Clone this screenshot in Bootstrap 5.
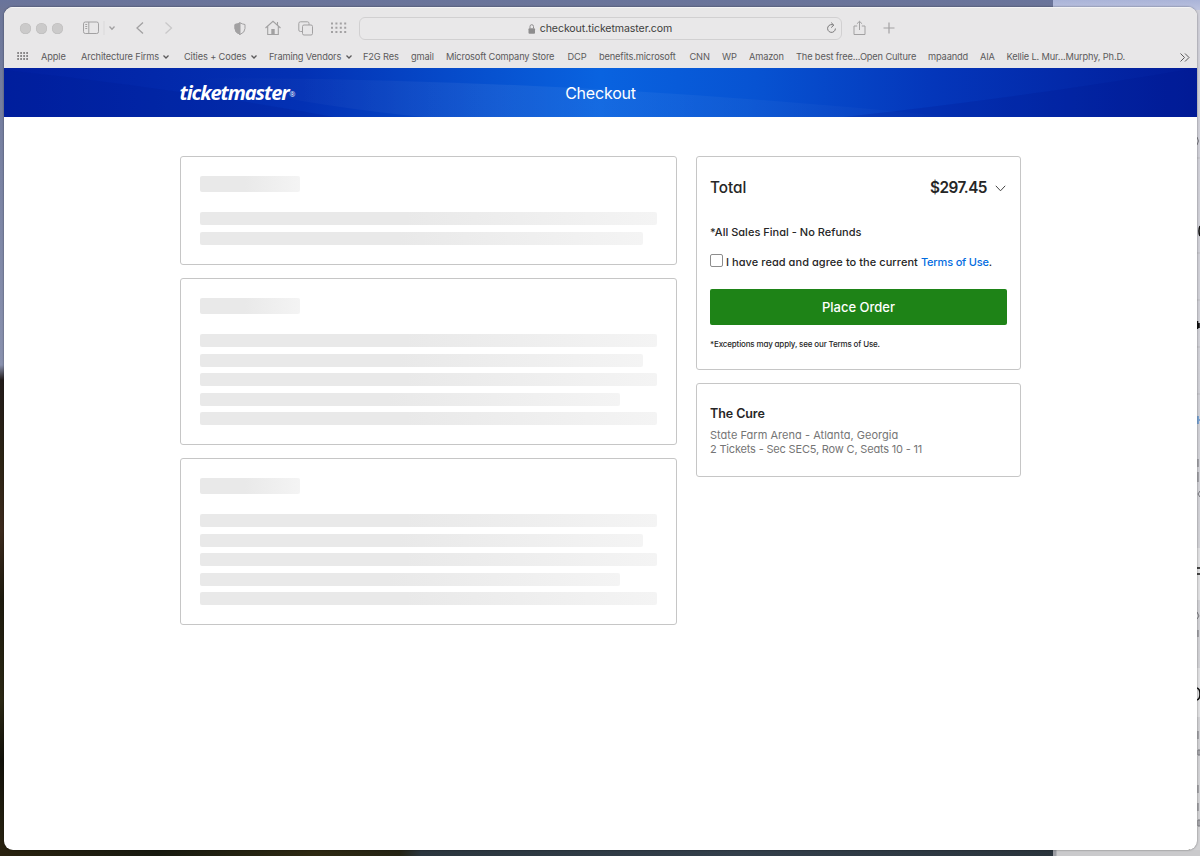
<!DOCTYPE html>
<html lang="en">
<head>
<meta charset="utf-8">
<meta name="viewport" content="width=device-width, initial-scale=1">
<title>Checkout</title>
<link href="https://cdn.jsdelivr.net/npm/bootstrap@5.3.0/dist/css/bootstrap.min.css" rel="stylesheet">
<style>
body{width:1200px;height:856px;overflow:hidden;padding:7px 3px 6px 4px;font-family:Inter,"Liberation Sans",sans-serif;
 background:
 linear-gradient(#aab4d8,#bcc3df) 1053px 0/147px 10px no-repeat,
 linear-gradient(90deg,#9b9da3 0 3px,#cacacc 4px) 1053px 850px/147px 6px no-repeat,
 linear-gradient(#cfcfd8,#d2d2d4) 1190px 0/10px 856px no-repeat,
 linear-gradient(90deg,#29220f,#181a10 15%,#2e2912 30%,#252414 38%,#2b363e 40%,#333f4b 70%,#2a343c) 0 840px/1053px 16px no-repeat,
 linear-gradient(#69749c,#6d7597) 0 0/1053px 10px no-repeat,
 linear-gradient(#6c7699,#8991ae 365px,#221b1a 380px,#2c2414 460px,#3c2a1d 530px,#1d1a0e 600px,#2b2814 700px,#12110a 760px,#2b2612);}
.window{height:843px;border-radius:9px;background:#fff;box-shadow:0 0 2px rgba(0,0,0,.5)}
.chrome{height:61px;background:#e8e7e8;box-shadow:inset 0 1px #f4f4f5}
.tools{height:42px;color:#a2a1a2;display:grid;grid-template-columns:16.5px 16px 31px 25px 28px 28px 69.5px 31px 33.5px 33px 27.5px 494.5px 30px 30px;padding-left:15.5px;align-items:center}
.tools svg,.marks svg{display:block;overflow:visible;fill:none;stroke:currentColor}
.dot{width:11px;height:11px;border-radius:50%;background:#cbcaca;box-shadow:inset 0 0 0 .5px #bdbcbc}
.address{width:483px;height:23px;padding-top:1px;border:1px solid #d1d0d1;border-radius:6px;background:#e9e8e9;font-size:10.6px;letter-spacing:-.1px;color:#3f3f40;position:relative}
.reload{position:absolute;right:4px;top:4px}
.marks{height:19px;display:grid;grid-template-columns:24px 40px 103px 85px 94px 48px 35px 121.5px 31.5px 90.5px 32.5px 27px 47px 132px 52px 26.5px 173.5px 12px;padding-left:13px;font-size:9.25px;letter-spacing:-.14px;line-height:15px;color:#5b5a5b;white-space:nowrap}
.marks svg.caret{display:inline-block;margin-left:4.5px;vertical-align:1px;stroke-width:1.3}
.brandbar{height:49px;padding-left:175.5px;color:#fff;position:relative;overflow:hidden;background:linear-gradient(90deg,#011fa0,#0331b4 25%,#0752d0 41%,#0963e0 50%,#0753d2 63%,#0436ba 78%,#021c98)}
.sheen{position:absolute;inset:0;width:100%;height:100%}
.logo{font:italic 700 20px/50px "Open Sans","Noto Sans",sans-serif;letter-spacing:-1.05px;position:relative}
.reg{font:400 7px/1 "Open Sans",sans-serif;letter-spacing:0;vertical-align:3px;margin-left:1px}
.pagename{position:absolute;left:0;right:0;top:0;line-height:50px;font-size:16px;letter-spacing:-.2px;font-feature-settings:"cv11"}
.checkout{padding:39px 0 0 176px;gap:19px;font-feature-settings:"cv11"}
.left-col{width:497px;gap:13px}
.right-col{width:325px;gap:13px}
.panel{border:1px solid #c6c6c6;border-radius:3px;background:#fff}
.skel{padding:19.3px 19.5px 19px 19px}
.bone{height:13px;border-radius:2px;background:linear-gradient(90deg,#e9e9e9 45%,#f4f4f4);margin-bottom:6.5px}
.bone.head{width:100px;height:16px;margin-bottom:20px}
.bone:last-child{margin-bottom:0}
.w97{width:97%}.w92{width:92%}
.order{height:213.5px;padding:19px 13px 0;color:#262626;font-weight:550}
.total{font-size:15.3px;line-height:24px}
.amount{letter-spacing:-.5px;font-weight:600;margin-right:8px}
.chev{fill:none;stroke:#444;margin-right:1px}
.sales{font-size:11px;line-height:17px;margin-top:24px;letter-spacing:.02px}
.terms{font-size:11px;line-height:16px;margin-top:13px;letter-spacing:.06px}
.terms a{color:#026cdf;text-decoration:none;letter-spacing:-.18px}
.box{width:13px;height:13px;border:1px solid #8d8d8d;border-radius:2px;margin:-3px 3px 0 0;background:#fff}
.place{height:36px;margin-top:19px;background:#1e8317;border-radius:2px;color:#fff;font-size:13px;font-weight:550;border:0;width:297px;padding:2px 0 0}
.except{font-size:8px;line-height:12px;margin-top:13px;letter-spacing:-.16px}
.event{height:94px;padding:21px 13px 0;font-size:11px;line-height:14.6px;color:#757575}
.event h2{font-size:12.5px;line-height:18px;color:#262626;font-weight:600;letter-spacing:-.08px;margin:0 0 5px}
.arena{letter-spacing:.03px}
.seats{letter-spacing:-.18px}
.behind{position:absolute;left:1197px;top:0;width:3px;height:856px;overflow:hidden}
</style>
</head>
<body>
<svg class="behind" viewBox="0 0 3 856"><path d="M0 158H3M0 253H3M0 300H3M0 347H3M0 394H3" stroke="#bdbdc1"/><path d="M0 548H3V600H0zM0 668H3V717H0z" fill="#e0e0e2"/><g stroke="#111" stroke-width="1.6" fill="none"><path d="M3 226q-2 5 0 10M.5 321V329M2 323v5M0 568H3M0 574H3M0 688q3 1 3 6q0 5-3 6"/></g><g stroke="#77777d" fill="none"><path d="M0 137q3 4 0 8M1 459V467M1 472V482M3 491l-2 3 2 3M0 612l2 4-2 3M1 630V637M1 731V739M1 750h2v5H1zM1 785V793M1 803V811M1 820h2v6H1z"/></g><path d="M1 416V424M2 420H3" stroke="#2477cf"/></svg>
<div class="window overflow-hidden position-relative">
 <header class="chrome">
  <div class="tools">
   <i class="dot"></i><i class="dot"></i><i class="dot"></i>
   <svg width="24" height="14"><rect x=".5" y="1" width="15" height="11.500" rx="1.8"/><path d="M5.800 1V12.500M2.300 3.500H4.200M2.300 5.500H4.200M2.300 7.500H4.200"/><path d="M21 0V14" style="stroke:#dad9da"/></svg>
   <svg width="8" height="6"><path d="M1.500 1.500 4 4.200 6.500 1.500" stroke-width="1.300"/></svg>
   <svg width="8" height="12"><path d="M7 .5 1 6 7 11.500" stroke-width="1.300"/></svg>
   <svg width="8" height="12" style="stroke:#c9c8c9"><path d="M1.500 .5 7.500 6 1.500 11.500" stroke-width="1.300"/></svg>
   <svg width="12" height="13"><path d="M6 .8Q8.500 2.200 11 2.500V6.500Q11 10.500 6 12.500Q1 10.500 1 6.500V2.500Q3.500 2.200 6 .8z"/><path d="M6 .8Q3.500 2.200 1 2.500V6.500Q1 10.500 6 12.500z" fill="currentColor"/></svg>
   <svg width="16" height="15"><path d="M.5 7 8 .3 15.500 7M2.700 5.500V13.500H13.300V5.500M12.500 4V1" stroke-width="1.100"/><path d="M6.300 13.500V8H9.700V13.500z" fill="currentColor" stroke="none"/></svg>
   <svg width="16" height="15"><rect x="4.500" y="4" width="10" height="10" rx="1.500"/><path d="M4.500 10.500H2.500Q.8 10.500 .8 9V2.500Q.8 .8 2.500 .8H9.500Q11 .8 11 2.500V4"/></svg>
   <svg width="16" height="12"><path d="M0 1.500H15.500M0 5.800H15.500M0 10.100H15.500" stroke-width="2" stroke-dasharray="2 2.400"/></svg>
   <div class="address d-flex align-items-center justify-content-center"><svg class="me-1" width="8" height="10"><rect x=".5" y="4.300" width="6.500" height="5.500" rx="1" style="fill:#8e8d8e;stroke:none"/><path d="M2 4.500V2.500Q2 .7 3.750 .7T5.500 2.500V4.500" style="stroke:#8e8d8e"/></svg><span>checkout.ticketmaster.com</span>
    <svg class="reload" width="11" height="12" style="stroke:#7b7a7b"><path d="M7.600 3.200A3.900 3.900 0 1 0 9.400 6.500M5.200 .6 7.800 3.200 5.200 5.600"/></svg></div>
   <svg width="13" height="15"><path d="M4.200 5H1V13.500H12V5H8.800M6.500 9V.3M3.900 2.800 6.500 .3 9.100 2.800"/></svg>
   <svg width="12" height="12"><path d="M.5 6H11.500M6 .5V11.500" stroke-width="1.200"/></svg>
  </div>
  <nav class="marks">
   <svg width="11" height="9" style="margin-top:3px"><path d="M.3 .9H11M.3 3.900H11M.3 6.900H11" stroke-width="1.500" stroke-dasharray="1.600 1.400"/></svg>
   <span>Apple</span>
   <span>Architecture Firms<svg class="caret" width="6" height="4"><path d="M.5 .5 3 3 5.500 .5"/></svg></span>
   <span>Cities + Codes<svg class="caret" width="6" height="4"><path d="M.5 .5 3 3 5.500 .5"/></svg></span>
   <span>Framing Vendors<svg class="caret" width="6" height="4"><path d="M.5 .5 3 3 5.500 .5"/></svg></span>
   <span>F2G Res</span><span>gmail</span><span>Microsoft Company Store</span><span>DCP</span><span>benefits.microsoft</span><span>CNN</span><span>WP</span><span>Amazon</span><span>The best free...Open Culture</span><span>mpaandd</span><span>AIA</span><span>Kellie L. Mur...Murphy, Ph.D.</span>
   <svg width="10" height="9" style="margin-top:4px"><path d="M.5 .5 4.500 4.500 .5 8.500M5 .5 9 4.500 5 8.500"/></svg>
  </nav>
 </header>
 <div class="brandbar">
  <svg class="sheen" viewBox="0 0 1193 49" preserveAspectRatio="none"><defs><linearGradient id="g"><stop offset="0" stop-color="#fff" stop-opacity="0"/><stop offset=".4" stop-color="#fff" stop-opacity=".06"/><stop offset="1" stop-color="#fff" stop-opacity=".01"/></linearGradient></defs><path d="M0 2Q170 20 330 49H0z" fill="#001a90" opacity=".22"/><path d="M190 10Q560 10 950 49H420Q290 36 190 10z" fill="url(#g)"/><path d="M840 49Q1030 28 1193 0V49z" fill="#00128a" opacity=".2"/></svg>
  <div class="pagename text-center">Checkout</div>
  <span class="logo">ticketmaster<span class="reg">®</span></span>
 </div>
 <main class="checkout d-flex align-items-start">
  <section class="left-col d-flex flex-column">
   <div class="panel skel"><div class="bone head"></div><div class="bone"></div><div class="bone w97"></div></div>
   <div class="panel skel"><div class="bone head"></div><div class="bone"></div><div class="bone w97"></div><div class="bone"></div><div class="bone w92"></div><div class="bone"></div></div>
   <div class="panel skel"><div class="bone head"></div><div class="bone"></div><div class="bone w97"></div><div class="bone"></div><div class="bone w92"></div><div class="bone"></div></div>
  </section>
  <aside class="right-col d-flex flex-column">
   <div class="panel order">
    <div class="total d-flex align-items-center"><span>Total</span><span class="ms-auto amount">$297.45</span><svg class="chev" width="11" height="7"><path d="M.8 .8 5.500 5.800 10.200 .8"/></svg></div>
    <div class="sales">*All Sales Final - No Refunds</div>
    <div class="terms d-flex align-items-center"><i class="box"></i><span>I have read and agree to the current <a href="#">Terms of Use</a>.</span></div>
    <button class="place d-block">Place Order</button>
    <div class="except">*Exceptions may apply, see our Terms of Use.</div>
   </div>
   <div class="panel event"><h2>The Cure</h2><div class="arena">State Farm Arena - Atlanta, Georgia</div><div class="seats">2 Tickets - Sec SEC5, Row C, Seats 10 - 11</div></div>
  </aside>
 </main>
</div>
<script src="https://cdn.jsdelivr.net/npm/bootstrap@5.3.0/dist/js/bootstrap.bundle.min.js"></script>
</body>
</html>
